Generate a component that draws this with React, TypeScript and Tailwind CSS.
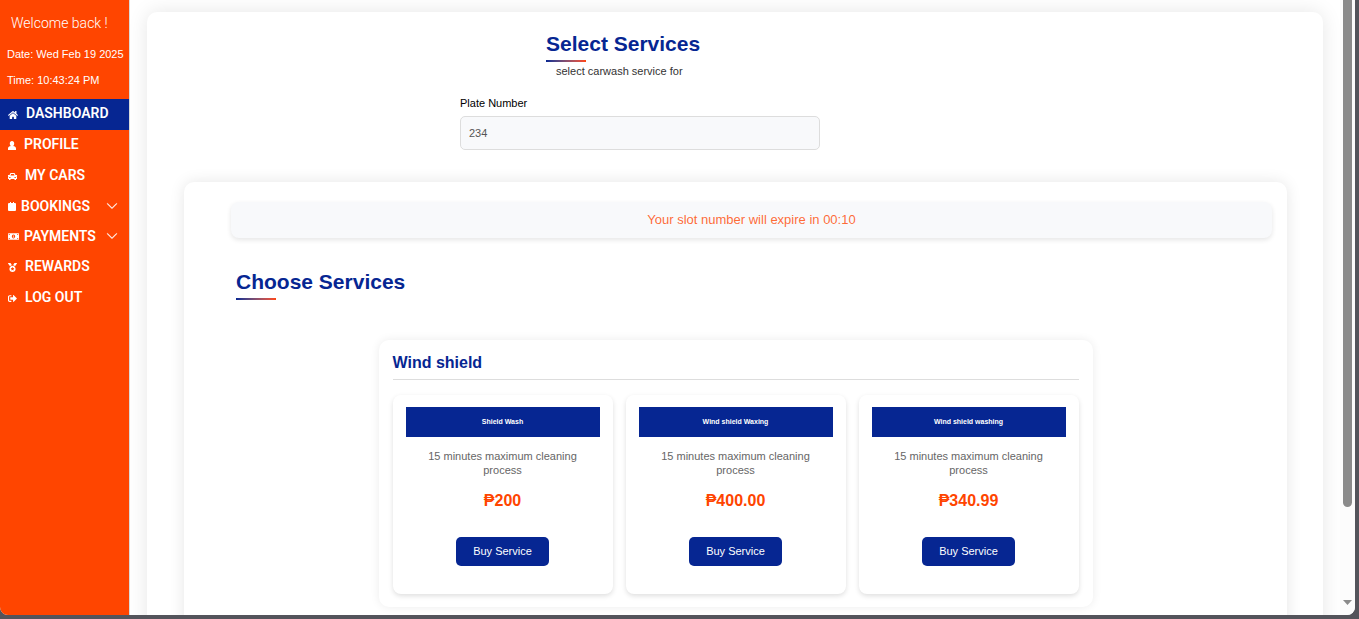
import React from "react";
import { FaHome, FaMedal, FaMoneyBillAlt, FaSignOutAlt } from "react-icons/fa";
import { BsChevronDown } from "react-icons/bs";

const services = [
  { name: "Shield Wash", price: "200" },
  { name: "Wind shield Waxing", price: "400.00" },
  { name: "Wind shield washing", price: "340.99" },
];

function BookingIcon() {
  return (
    <svg width="8" height="9" viewBox="0 0 8 9" fill="currentColor" aria-hidden="true">
      <path d="M1 1h1V0h1v1h2V0h1v1h1q1 0 1 1v6q0 1-1 1H1q-1 0-1-1V2q0-1 1-1z" />
    </svg>
  );
}

function ProfileIcon() {
  return (
    <svg width="8" height="9" viewBox="0 0 8 9" fill="currentColor" aria-hidden="true">
      <path d="M4 0C5.4 0 6.2 1 6.2 2.4S5.5 4.6 5 5.1C6.8 5.3 8 6 8 7.6V9H0V7.6C0 6 1.2 5.3 3 5.1 2.5 4.6 1.8 3.8 1.8 2.4S2.6 0 4 0z" />
    </svg>
  );
}

function CarIcon() {
  return (
    <svg width="9" height="7" viewBox="0 0 9 7" fill="currentColor" aria-hidden="true">
      <path
        fillRule="evenodd"
        d="M2.5 0h4l1 2H9v1h-.4l.4.8V6H8v1H6.5V6h-4v1H1V6H0V3.8L.4 3H0V2h1.500zM3.100 1 2.500 2.500h4L5.900 1zM1.200 4v1h1.300V4zM6.500 4v1h1.300V4z"
      />
    </svg>
  );
}

function NavLink({
  icon,
  label,
  active = false,
}: {
  icon: React.ReactNode;
  label: string;
  active?: boolean;
}) {
  return (
    <a
      href="#"
      aria-current={active ? "page" : undefined}
      className={`flex h-[31px] items-center gap-2 px-2 ${active ? "bg-[#062692]" : ""}`}
    >
      <span>{icon}</span>
      <span className="pb-1">{label}</span>
    </a>
  );
}

function NavGroup({ icon, label }: { icon: React.ReactNode; label: string }) {
  return (
    <button
      type="button"
      aria-expanded="false"
      className="flex h-[30px] w-full items-center gap-[5px] pr-[11px] pb-0.5 pl-2 text-left"
    >
      {icon}
      <span className="grow">{label}</span>
      <BsChevronDown size={12} stroke="currentColor" strokeWidth={0.5} />
    </button>
  );
}

function Sidebar() {
  return (
    <aside className="w-[130px] shrink-0 border-r border-[#d9d9d9] bg-[#ff4500] text-white">
      <p className="px-[11px] pt-[13px] font-[Roboto,sans-serif] text-sm leading-5 font-light">
        Welcome back !
      </p>
      <div className="flex flex-col gap-2.5 px-[7px] pt-[13px] pb-2.5 text-[11px] leading-4 whitespace-nowrap">
        <p>Date: Wed Feb 19 2025</p>
        <p>Time: 10:43:24 PM</p>
      </div>
      <nav className="pt-px font-[Roboto,sans-serif] text-sm leading-4 font-semibold">
        <NavLink icon={<FaHome size={10} />} label="DASHBOARD" active />
        <NavLink icon={<ProfileIcon />} label="PROFILE" />
        <NavLink icon={<CarIcon />} label="MY CARS" />
        <NavGroup icon={<BookingIcon />} label="BOOKINGS" />
        <NavGroup icon={<FaMoneyBillAlt size={11} />} label="PAYMENTS" />
        <NavLink icon={<FaMedal size={9} />} label="REWARDS" />
        <NavLink icon={<FaSignOutAlt size={9} />} label="LOG OUT" />
      </nav>
    </aside>
  );
}

function Heading({ children }: { children: React.ReactNode }) {
  return (
    <h2 className="text-[21px] leading-8 font-bold text-[#062692]">
      {children}
      <span className="block h-0.5 w-10 bg-linear-to-r from-[#062692] to-[#ff4500]" />
    </h2>
  );
}

function ServiceCard({ name, price }: { name: string; price: string }) {
  return (
    <article className="flex flex-col items-center rounded-lg bg-white px-[13px] pt-3 pb-7 text-center shadow-[0_2px_5px_rgba(0,0,0,0.13)]">
      <h4 className="w-full bg-[#062692] text-[7px] leading-[30px] font-bold text-white">
        {name}
      </h4>
      <p className="mt-3 px-4 text-[11px] leading-[14px] text-[#666666]">
        15 minutes maximum cleaning process
      </p>
      <p className="mt-3 text-base leading-6 font-bold text-[#ff4500]">₱{price}</p>
      <button
        type="button"
        className="mt-6 h-[29px] rounded-[5px] bg-[#062692] px-[17px] text-[11px] text-white"
      >
        Buy Service
      </button>
    </article>
  );
}

function Scrollbar() {
  return (
    <div className="flex w-[15px] shrink-0 flex-col items-center bg-[#fcfcfc] pb-2.5">
      <div className="w-[9px] grow rounded-b-full bg-[#8b8b8b]" />
      <svg width="9" height="5" viewBox="0 0 9 5" className="mt-[93px]" aria-hidden="true">
        <path d="M0 0h9L4.5 5z" fill="#8b8b8b" />
      </svg>
    </div>
  );
}

export default function App() {
  return (
    <div className="h-screen bg-[#54545b] pr-1 pb-1 font-['Liberation_Sans',Arial,sans-serif]">
      <div className="flex h-full overflow-hidden rounded-b-lg bg-white">
        <Sidebar />
        <main className="min-w-0 grow overflow-hidden px-[17px] pt-3">
          <section className="min-h-screen rounded-[10px] bg-white pt-4 shadow-[0_0_20px_rgba(0,0,0,0.1)]">
            <div className="mx-auto w-[550px] pr-[190px]">
              <div className="pl-[86px]">
                <Heading>Select Services</Heading>
                <p className="pt-px pl-2.5 text-[11px] leading-4 text-[#333333]">
                  select carwash service for
                </p>
              </div>
              <form className="pt-4">
                <label htmlFor="plate" className="block text-[11px] leading-4 text-black">
                  Plate Number
                </label>
                <input
                  id="plate"
                  type="text"
                  defaultValue="234"
                  className="mt-[5px] block h-[34px] w-full rounded-[5px] border border-[#dddddd] bg-[#f8f9fb] px-2 text-[11px] text-[#555555]"
                />
              </form>
            </div>

            <section className="mr-9 ml-[37px] mt-8 min-h-screen rounded-[10px] bg-white pt-5 shadow-[0_0_15px_rgba(0,0,0,0.1)]">
              <p
                role="status"
                className="mr-[15px] ml-[47px] rounded-lg bg-[#f8f9fb] text-center text-[13px] leading-9 text-[#ff4500]/80 shadow-[0_2px_5px_rgba(0,0,0,0.1)]"
              >
                Your slot number will expire in 00:10
              </p>
              <div className="pt-7 pl-[52px]">
                <Heading>Choose Services</Heading>
              </div>

              <section className="mx-auto mt-10 max-w-[714px] rounded-[10px] bg-white px-3.5 pt-[11px] pb-[13px] shadow-[0_0_10px_rgba(0,0,0,0.08)]">
                <h3 className="border-b border-[#dddddd] pb-1 text-base leading-6 font-bold text-[#062692]">
                  Wind shield
                </h3>
                <div className="grid grid-cols-3 gap-[13px] pt-[15px]">
                  {services.map((service) => (
                    <ServiceCard key={service.name} {...service} />
                  ))}
                </div>
              </section>
            </section>
          </section>
        </main>
        <Scrollbar />
      </div>
    </div>
  );
}
